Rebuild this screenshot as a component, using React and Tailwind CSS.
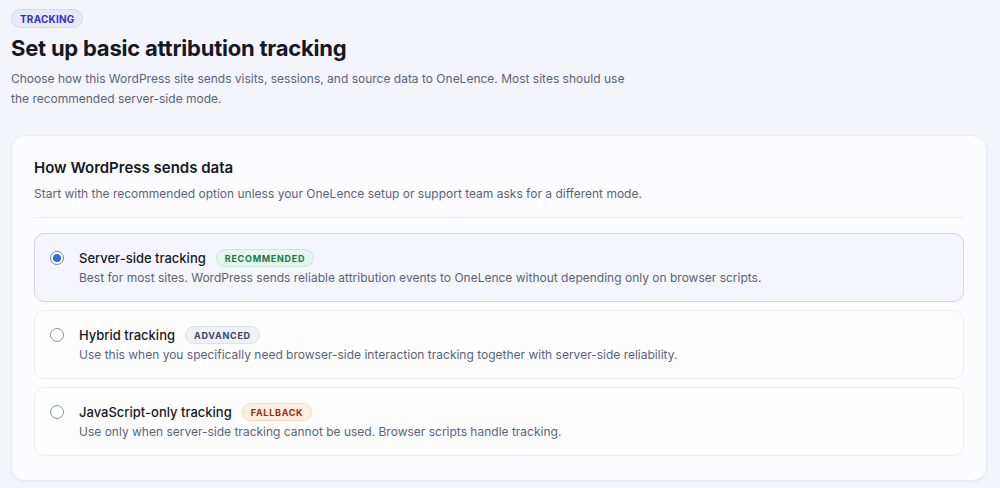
import React from "react";

const options = [
  {
    title: "Server-side tracking",
    badge: "RECOMMENDED",
    badgeCls: "bg-[#e4f5ec] border-[#c9eada] text-[#17794a]",
    desc: "Best for most sites. WordPress sends reliable attribution events to OneLence without depending only on browser scripts.",
    selected: true,
  },
  {
    title: "Hybrid tracking",
    badge: "ADVANCED",
    badgeCls: "bg-[#eef1f6] border-[#dce1ea] text-[#3b4862]",
    desc: "Use this when you specifically need browser-side interaction tracking together with server-side reliability.",
    selected: false,
  },
  {
    title: "JavaScript-only tracking",
    badge: "FALLBACK",
    badgeCls: "bg-[#fdf0e0] border-[#f5d9b5] text-[#982a0e]",
    desc: "Use only when server-side tracking cannot be used. Browser scripts handle tracking.",
    selected: false,
  },
];

export default function App() {
  return (
    <div
      className="min-h-[488px] w-[1000px] bg-[#f4f5fa] pl-[11px] pr-[13px] pt-[9px] pb-[8px] text-[#161a25]"
      style={{ fontFamily: "Inter, 'Noto Sans', sans-serif" }}
    >
      <div className="flex">
        <div className="flex h-[19px] items-center rounded-full border border-[#d6d6f6] bg-[#e8e8fb] px-[8px] text-[10px] font-bold leading-none tracking-[0.02em] text-[#3a2fc4]">
          TRACKING
        </div>
      </div>
      <h1 className="mt-[6px] text-[22px] font-bold leading-[28px] tracking-[-0.01em] text-[#141824]">
        Set up basic attribution tracking
      </h1>
      <p className="mt-[7px] max-w-[632px] text-[12px] leading-[20px] text-[#5a6478]">
        Choose how this WordPress site sends visits, sessions, and source data to OneLence. Most sites should use the recommended server-side mode.
      </p>

      <div className="mt-[26px] rounded-[14px] border border-[#eaecf1] bg-[#fcfcfe] px-[22px] pb-[24px] pt-[20px] shadow-[0_1px_2px_rgba(20,24,40,0.05)]">
        <h2 className="text-[15px] font-semibold leading-[24px] text-[#141824]">
          How WordPress sends data
        </h2>
        <p className="mt-[4px] text-[12px] leading-[20px] text-[#5a6478]">
          Start with the recommended option unless your OneLence setup or support team asks for a different mode.
        </p>
        <div className="mt-[13px] h-px bg-[#e9ebf0]" />
        <div className="mt-[15px] flex flex-col gap-[8px]">
          {options.map((o) => (
            <div
              key={o.title}
              className={
                o.selected
                  ? "flex h-[69px] items-start gap-[15px] rounded-[10px] border border-[#d5d1f4] bg-[#f5f5fe] px-[15px] pt-[14px]"
                  : "flex h-[69px] items-start gap-[15px] rounded-[10px] border border-[#eceef2] bg-[#fdfdfe] px-[15px] pt-[14px]"
              }
            >
              <div className="flex h-[20px] items-center">
                <div
                  className={
                    o.selected
                      ? "flex h-[14px] w-[14px] items-center justify-center rounded-full border border-[#7f8799] bg-white"
                      : "flex h-[14px] w-[14px] items-center justify-center rounded-full border border-[#8d94a3] bg-white"
                  }
                >
                  {o.selected && <div className="h-[8px] w-[8px] rounded-full bg-[#2f6fd6]" />}
                </div>
              </div>
              <div className="flex flex-col">
                <div className="flex h-[20px] items-center gap-[10px]">
                  <span className="text-[13px] font-medium leading-[20px] text-[#161a25]">{o.title}</span>
                  <span
                    className={
                      "inline-flex h-[18px] items-center rounded-full border px-[8px] text-[9px] font-bold leading-none tracking-[0.08em] " +
                      o.badgeCls
                    }
                  >
                    {o.badge}
                  </span>
                </div>
                <p className="text-[12px] leading-[20px] text-[#5a6478]">{o.desc}</p>
              </div>
            </div>
          ))}
        </div>
      </div>
    </div>
  );
}
